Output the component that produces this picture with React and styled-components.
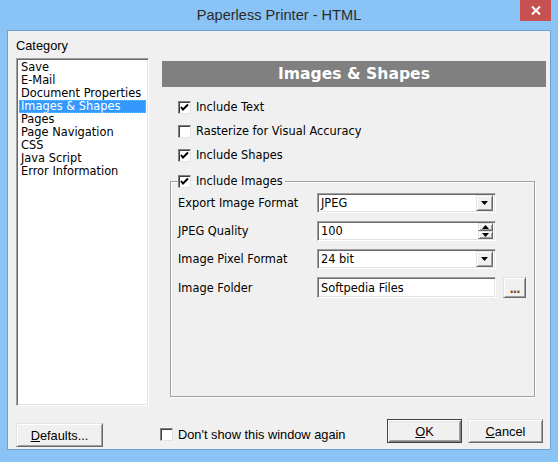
import React from 'react'
import styled, { createGlobalStyle, css } from 'styled-components'

const GlobalStyle = createGlobalStyle`
html, body {
  margin: 0;
  padding: 0;
  background: #8ac3f6;
}
* { box-sizing: border-box; }
`

const ui = `"Liberation Sans", Arial, sans-serif`
const classic = `"DejaVu Sans", Verdana, sans-serif`

const sunken = css`
  border: 1px solid;
  border-color: #a0a0a0 #ffffff #ffffff #a0a0a0;
  box-shadow: inset 1px 1px 0 #696969, inset -1px -1px 0 #e3e3e3;
`

const raised = css`
  border: 1px solid;
  border-color: #e3e3e3 #696969 #696969 #e3e3e3;
  box-shadow: inset 1px 1px 0 #ffffff, inset -1px -1px 0 #a0a0a0;
  background: #f0f0f0;
`

const Frame = styled.div`
  width: 558px;
  height: 462px;
  background: #8ac3f6;
  display: flex;
  flex-direction: column;
  padding: 0 7px 12px;
`

const TitleBar = styled.div`
  height: 30px;
  margin: 0 -7px;
  display: grid;
  grid-template-columns: 1fr auto 1fr;
  align-items: start;
`

const Title = styled.div`
  grid-column: 2;
  font-family: ${ui};
  font-size: 14.6px;
  color: #2b2b2b;
  line-height: 31px;
`

const CloseButton = styled.div`
  grid-column: 3;
  justify-self: end;
  margin-right: 7px;
  width: 31px;
  height: 21px;
  background: #c75050;
  display: flex;
  align-items: center;
  justify-content: center;
`

const Client = styled.div`
  flex: 1;
  border: 1px solid #6f9fd0;
  background: #f0f0f0;
  display: flex;
  flex-direction: column;
  font-family: ${classic};
  font-size: 11.4px;
  color: #000;
`

const Main = styled.div`
  display: flex;
  gap: 13px;
  padding: 0 4px 0 8px;
`

const Sidebar = styled.div`
  width: 133px;
  flex: none;
`

const CategoryLabel = styled.div`
  font-family: ${ui};
  font-size: 12.8px;
  line-height: 14px;
  padding-top: 8px;
  margin-bottom: 5px;
`

const ListBox = styled.div`
  ${sunken};
  background: #fff;
  height: 348px;
  padding: 2px;
`

const ListItem = styled.div`
  height: 13px;
  line-height: 12px;
  padding-left: 2px;
  white-space: nowrap;
  ${p => p.$selected && css`
    background: #3399ff;
    color: #fff;
    outline: 1px dotted #f0a050;
    outline-offset: -1px;
  `}
`

const Panel = styled.div`
  flex: 1;
  padding-top: 30px;
`

const PanelHeader = styled.div`
  height: 26px;
  background: #808080;
  color: #fff;
  font-weight: bold;
  font-size: 15.6px;
  line-height: 26px;
  text-align: center;
  margin-bottom: 8px;
`

const OptionRow = styled.div`
  height: 24px;
  display: flex;
  align-items: center;
  gap: 5px;
  padding-left: 16px;
`

const Box = styled.span`
  width: 13px;
  height: 13px;
  flex: none;
  background: #fff;
  border: 1px solid;
  border-color: #808080 #e3e3e3 #e3e3e3 #808080;
  box-shadow: inset 1px 1px 0 #404040;
  display: flex;
  align-items: center;
  justify-content: center;
`

const Group = styled.fieldset`
  margin: 6px 11px 0 8px;
  padding: 0 7px 98px;
  border: 1px solid #a0a0a0;
  box-shadow: 1px 1px 0 #fff, inset 1px 1px 0 #fff;
  min-width: 0;
`

const GroupLegend = styled.legend`
  padding: 0 2px 0 0;
  height: 16px;
  display: flex;
  align-items: center;
  gap: 5px;
`

const Fields = styled.div`
  padding-top: 4px;
  display: flex;
  flex-direction: column;
  gap: 8px;
`

const FieldRow = styled.div`
  display: flex;
  align-items: center;
  height: ${p => p.$tall ? 21 : 20}px;
`

const FieldLabel = styled.div`
  width: 139px;
  flex: none;
`

const Field = styled.div`
  ${sunken};
  background: #fff;
  width: 179px;
  height: 100%;
  display: flex;
  align-items: center;
  padding: 2px 2px 2px 3px;
`

const FieldText = styled.div`
  flex: 1;
  white-space: nowrap;
`

const DropButton = styled.div`
  ${raised};
  width: 17px;
  height: 16px;
  display: flex;
  align-items: center;
  justify-content: center;
`

const Spin = styled.div`
  width: 15px;
  height: 16px;
  display: flex;
  flex-direction: column;
`

const SpinHalf = styled.div`
  ${raised};
  flex: 1;
  display: flex;
  align-items: center;
  justify-content: center;
`

const BrowseButton = styled.div`
  ${raised};
  width: 23px;
  height: 21px;
  margin-left: 7px;
  font-weight: bold;
  color: #7a4a10;
  text-align: center;
  line-height: 22px;
  letter-spacing: -1px;
`

const Footer = styled.div`
  display: flex;
  align-items: flex-start;
  padding: 13px 7px 0 8px;
  font-family: ${ui};
  font-size: 12.8px;
`

const Button = styled.div`
  ${raised};
  width: ${p => p.$width || 75}px;
  height: 24px;
  display: flex;
  align-items: center;
  justify-content: center;
  margin-top: ${p => p.$offset || 0}px;
  ${p => p.$default && css`
    border-color: #404040;
    box-shadow: inset 1px 1px 0 #ffffff, inset -1px -1px 0 #808080, inset 2px 2px 0 #e3e3e3, inset -2px -2px 0 #a0a0a0;
  `}
`

const Accel = styled.span`
  text-decoration: underline;
`

const DontShow = styled.div`
  display: flex;
  align-items: center;
  gap: 5px;
  margin: 9px 0 0 57px;
  height: 13px;
`

const Actions = styled.div`
  margin-left: auto;
  display: flex;
  gap: 6px;
`

const Tick = () => (
  <svg width="9" height="9" viewBox="0 0 9 9">
    <path d="M1 4 L3 6.5 L8 1.5" fill="none" stroke="#000" strokeWidth="2" />
  </svg>
)

const Check = ({ checked }) => <Box>{checked && <Tick />}</Box>

const Down = () => (
  <svg width="7" height="4" viewBox="0 0 7 4"><path d="M0 0 H7 L3.5 4 Z" fill="#000" /></svg>
)
const Up = () => (
  <svg width="7" height="4" viewBox="0 0 7 4"><path d="M0 4 H7 L3.5 0 Z" fill="#000" /></svg>
)

const categories = [
  'Save', 'E-Mail', 'Document Properties', 'Images & Shapes', 'Pages',
  'Page Navigation', 'CSS', 'Java Script', 'Error Information',
]

export default function App() {
  return (
    <>
      <GlobalStyle />
      <Frame>
        <TitleBar>
          <Title>Paperless Printer - HTML</Title>
          <CloseButton>
            <svg width="10" height="9" viewBox="0 0 10 9">
              <path d="M1 0.5 L9 8.5 M9 0.5 L1 8.5" stroke="#fff" strokeWidth="2" />
            </svg>
          </CloseButton>
        </TitleBar>
        <Client>
          <Main>
            <Sidebar>
              <CategoryLabel>Category</CategoryLabel>
              <ListBox>
                {categories.map(c => (
                  <ListItem key={c} $selected={c === 'Images & Shapes'}>{c}</ListItem>
                ))}
              </ListBox>
            </Sidebar>
            <Panel>
              <PanelHeader>Images &amp; Shapes</PanelHeader>
              <OptionRow><Check checked />Include Text</OptionRow>
              <OptionRow><Check />Rasterize for Visual Accuracy</OptionRow>
              <OptionRow><Check checked />Include Shapes</OptionRow>
              <Group>
                <GroupLegend><Check checked />Include Images</GroupLegend>
                <Fields>
                  <FieldRow>
                    <FieldLabel>Export Image Format</FieldLabel>
                    <Field><FieldText>JPEG</FieldText><DropButton><Down /></DropButton></Field>
                  </FieldRow>
                  <FieldRow>
                    <FieldLabel>JPEG Quality</FieldLabel>
                    <Field>
                      <FieldText>100</FieldText>
                      <Spin><SpinHalf><Up /></SpinHalf><SpinHalf><Down /></SpinHalf></Spin>
                    </Field>
                  </FieldRow>
                  <FieldRow>
                    <FieldLabel>Image Pixel Format</FieldLabel>
                    <Field><FieldText>24 bit</FieldText><DropButton><Down /></DropButton></Field>
                  </FieldRow>
                  <FieldRow $tall>
                    <FieldLabel>Image Folder</FieldLabel>
                    <Field><FieldText>Softpedia Files</FieldText></Field>
                    <BrowseButton>...</BrowseButton>
                  </FieldRow>
                </Fields>
              </Group>
            </Panel>
          </Main>
          <Footer>
            <Button $width={87} $offset={4}><Accel>D</Accel>efaults...</Button>
            <DontShow><Check />Don't show this window again</DontShow>
            <Actions>
              <Button $default><Accel>O</Accel>K</Button>
              <Button><Accel>C</Accel>ancel</Button>
            </Actions>
          </Footer>
        </Client>
      </Frame>
    </>
  )
}
